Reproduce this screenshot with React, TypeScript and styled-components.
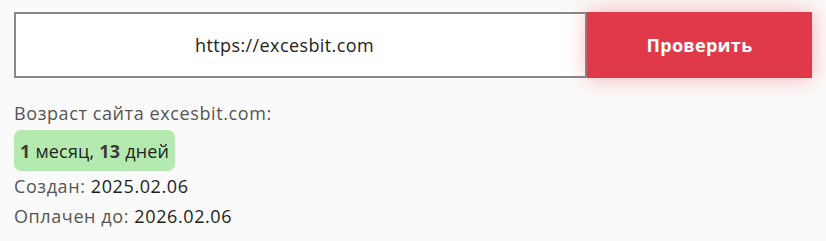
import React from "react";
import styled, { createGlobalStyle } from "styled-components";

const GlobalStyle = createGlobalStyle`
  html, body {
    margin: 0;
    padding: 0;
    background: #fafafa;
    font-family: "Open Sans", "Liberation Sans", sans-serif;
  }
`;

const Page = styled.div`
  padding: 12px 14px 0 14px;
  box-sizing: border-box;
  width: 826px;
`;

const CheckForm = styled.form`
  display: flex;
  height: 66px;
  margin: 0;
  width: 798px;
`;

const UrlInput = styled.input`
  flex: 1;
  box-sizing: border-box;
  height: 66px;
  border: 2px solid #888;
  background: #fff;
  padding: 0 32px 0 0;
  text-align: center;
  font-family: inherit;
  font-size: 18px;
  letter-spacing: 0.4px;
  color: #222;
  outline: none;
`;

const CheckButton = styled.button`
  width: 225px;
  height: 66px;
  border: none;
  background: #e03a4a;
  color: #fff;
  font-family: inherit;
  font-weight: 700;
  font-size: 18px;
  letter-spacing: 0.3px;
  box-shadow: 0 0 22px rgba(255, 40, 40, 0.35);
  cursor: pointer;
`;

const Info = styled.div`
  display: flex;
  flex-direction: column;
  align-items: flex-start;
  margin-top: 23px;
  font-size: 18px;
  letter-spacing: 0.6px;
  color: #555;
`;

const Line = styled.div<{ $gap?: number }>`
  line-height: 24px;
  margin-top: ${(p) => p.$gap ?? 0}px;
`;

const AgeBadge = styled.div`
  margin-top: 5px;
  background: #b4eab0;
  border-radius: 7px;
  height: 41px;
  padding: 0 6px;
  display: flex;
  align-items: center;
  font-size: 18px;
  letter-spacing: 0.2px;
  font-weight: 500;
  color: #222;
`;

const Num = styled.b`
  color: #3c3c3c;
  font-weight: 700;
`;

const Value = styled.span`
  color: #1e1e1e;
  font-weight: 500;
`;

export default function App() {
  return (
    <>
      <GlobalStyle />
      <Page>
        <CheckForm onSubmit={(e) => e.preventDefault()}>
          <UrlInput defaultValue="https://excesbit.com" />
          <CheckButton type="submit">Проверить</CheckButton>
        </CheckForm>
        <Info>
          <Line>Возраст сайта excesbit.com:</Line>
          <AgeBadge>
            <span>
              <Num>1</Num> месяц, <Num>13</Num> дней
            </span>
          </AgeBadge>
          <Line $gap={3}>
            Создан: <Value>2025.02.06</Value>
          </Line>
          <Line $gap={6}>
            Оплачен до: <Value>2026.02.06</Value>
          </Line>
        </Info>
      </Page>
    </>
  );
}
